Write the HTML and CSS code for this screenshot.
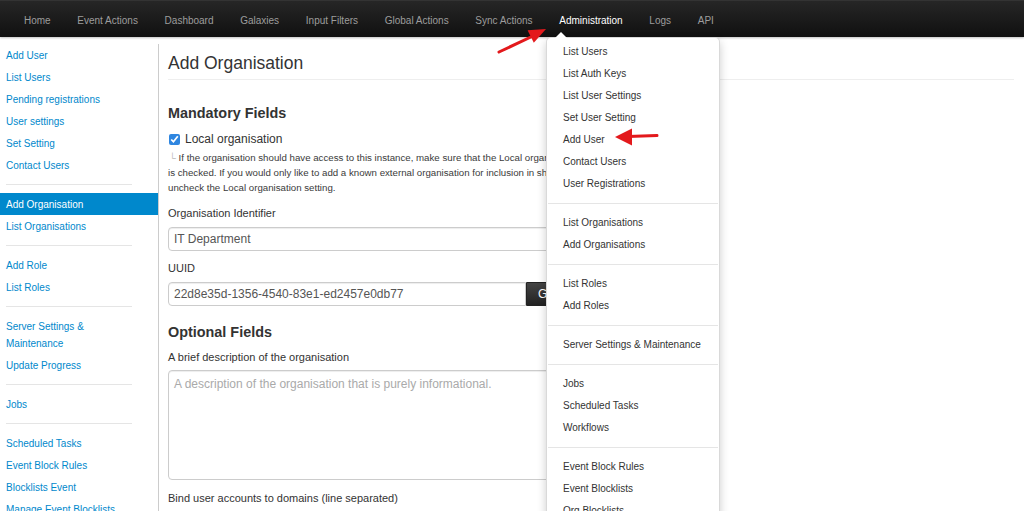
FILE: index.html
```html
<!DOCTYPE html>
<html>
<head>
    <meta charset="UTF-8">
    <title>Add Organisation</title>
    <link rel="stylesheet" href="styles.css">
</head>
<body>
    <div class="navbar">
        <ul class="nav">
            <li><a href="#">Home</a></li>
            <li><a href="#">Event Actions</a></li>
            <li><a href="#">Dashboard</a></li>
            <li><a href="#">Galaxies</a></li>
            <li><a href="#">Input Filters</a></li>
            <li><a href="#">Global Actions</a></li>
            <li><a href="#">Sync Actions</a></li>
            <li class="dropdown open">
                <a href="#" class="current">Administration</a>
                <ul class="dropdown-menu">
                    <li><a href="#">List Users</a></li>
                    <li><a href="#">List Auth Keys</a></li>
                    <li><a href="#">List User Settings</a></li>
                    <li><a href="#">Set User Setting</a></li>
                    <li><a href="#">Add User</a></li>
                    <li><a href="#">Contact Users</a></li>
                    <li><a href="#">User Registrations</a></li>
                    <li class="divider"></li>
                    <li><a href="#">List Organisations</a></li>
                    <li><a href="#">Add Organisations</a></li>
                    <li class="divider"></li>
                    <li><a href="#">List Roles</a></li>
                    <li><a href="#">Add Roles</a></li>
                    <li class="divider"></li>
                    <li><a href="#">Server Settings &amp; Maintenance</a></li>
                    <li class="divider"></li>
                    <li><a href="#">Jobs</a></li>
                    <li><a href="#">Scheduled Tasks</a></li>
                    <li><a href="#">Workflows</a></li>
                    <li class="divider"></li>
                    <li><a href="#">Event Block Rules</a></li>
                    <li><a href="#">Event Blocklists</a></li>
                    <li><a href="#">Org Blocklists</a></li>
                    <li><a href="#">Blocklist Rules</a></li>
                </ul>
            </li>
            <li><a href="#">Logs</a></li>
            <li><a href="#">API</a></li>
        </ul>
    </div>

    <div class="page">
        <ul class="side-menu">
            <li><a href="#">Add User</a></li>
            <li><a href="#">List Users</a></li>
            <li><a href="#">Pending registrations</a></li>
            <li><a href="#">User settings</a></li>
            <li><a href="#">Set Setting</a></li>
            <li><a href="#">Contact Users</a></li>
            <li class="divider"></li>
            <li class="active"><a href="#">Add Organisation</a></li>
            <li><a href="#">List Organisations</a></li>
            <li class="divider"></li>
            <li><a href="#">Add Role</a></li>
            <li><a href="#">List Roles</a></li>
            <li class="divider"></li>
            <li><a href="#">Server Settings &amp; Maintenance</a></li>
            <li><a href="#">Update Progress</a></li>
            <li class="divider"></li>
            <li><a href="#">Jobs</a></li>
            <li class="divider"></li>
            <li><a href="#">Scheduled Tasks</a></li>
            <li><a href="#">Event Block Rules</a></li>
            <li><a href="#">Blocklists Event</a></li>
            <li><a href="#">Manage Event Blocklists</a></li>
        </ul>

        <div class="main">
            <h2 class="page-title">Add Organisation</h2>

            <h3>Mandatory Fields</h3>
            <label class="checkbox">
                <input type="checkbox" checked> Local organisation
            </label>
            <div class="help">
                <span class="help-mark">└</span> If the organisation should have access to this instance, make sure that the Local organisation checkbox<br>
                is checked. If you would only like to add a known external organisation for inclusion in sharing groups,<br>
                uncheck the Local organisation setting.
            </div>

            <label class="field-label" for="name">Organisation Identifier</label>
            <input type="text" id="name" class="text-input wide" value="IT Department">

            <label class="field-label" for="uuid">UUID</label>
            <div class="input-append">
                <input type="text" id="uuid" class="text-input" value="22d8e35d-1356-4540-83e1-ed2457e0db77">
                <button class="btn-inverse">Generate UUID</button>
            </div>

            <h3 class="optional">Optional Fields</h3>
            <label class="field-label short" for="description">A brief description of the organisation</label>
            <textarea id="description" class="text-input wide" placeholder="A description of the organisation that is purely informational."></textarea>

            <label class="field-label" for="domains">Bind user accounts to domains (line separated)</label>
            <textarea id="domains" class="text-input wide"></textarea>
        </div>
    </div>

    <!-- red annotation arrows -->
    <svg class="annotations" width="1024" height="511" viewBox="0 0 1024 511">
        <line x1="499" y1="52" x2="533" y2="36" stroke="#e3191c" stroke-width="3" stroke-linecap="round"/>
        <polygon points="546,29 533.8,42.8 527.6,30.2" fill="#e3191c"/>
        <line x1="657" y1="135.5" x2="628" y2="136.5" stroke="#e3191c" stroke-width="3" stroke-linecap="round"/>
        <polygon points="615,137 632,128.5 632,145.5" fill="#e3191c"/>
    </svg>
</body>
</html>
```

FILE: styles.css
```css
body {
    margin: 0;
    font-family: "Liberation Sans", Arial, Helvetica, sans-serif;
    color: #333;
    background: #fff;
    overflow: hidden;
}
ul {
    list-style: none;
    margin: 0;
    padding: 0;
}
a {
    text-decoration: none;
}

/* top bar */
.navbar {
    height: 37px;
    box-sizing: border-box;
    background: linear-gradient(#262626, #101010);
    border-top: 1px solid #333;
    box-shadow: 0 1px 2px rgba(0,0,0,0.25);
    position: relative;
    z-index: 5;
}
.nav {
    display: flex;
    padding-left: 10.6px;
}
.nav > li {
    position: relative;
}
.nav > li > a {
    display: block;
    padding: 3px 13.35px 0;
    line-height: 33px;
    font-size: 10px;
    color: #9d9d9d;
}
.nav > li > a.current {
    color: #fff;
}
.dropdown-menu {
    position: absolute;
    top: 36px;
    left: 0;
    width: 174px;
    box-sizing: border-box;
    padding: 3px 0;
    background: #fff;
    border: 1px solid rgba(0,0,0,0.15);
    border-radius: 5px;
    box-shadow: 0 4px 10px rgba(0,0,0,0.2);
}
.dropdown-menu::before {
    content: "";
    position: absolute;
    top: -6px;
    left: 8px;
    border-left: 6px solid transparent;
    border-right: 6px solid transparent;
    border-bottom: 6px solid #fff;
}
.dropdown-menu a {
    display: block;
    padding: 0 16px;
    line-height: 22px;
    font-size: 10px;
    color: #333;
    white-space: nowrap;
}
.dropdown-menu .divider {
    height: 1px;
    margin: 8px 1px;
    background: #e5e5e5;
}

/* page */
.page {
    display: flex;
}
.side-menu {
    width: 158px;
    flex-shrink: 0;
    margin-top: 7px;
    min-height: 600px;
    border-right: 1px solid #ccc;
}
.side-menu a {
    display: block;
    padding: 2.5px 26px 2.5px 6px;
    line-height: 17px;
    font-size: 10px;
    color: #0088cc;
}
.side-menu .active a {
    background: #0088cc;
    color: #fff;
}
.side-menu .divider {
    height: 1px;
    margin: 8px 26px 8px 6px;
    background: #e5e5e5;
}

.main {
    flex: 1;
    padding: 15px 10px 0 9px;
}
.page-title {
    margin: 0;
    padding-bottom: 5px;
    line-height: 22px;
    font-size: 17.5px;
    font-weight: normal;
    border-bottom: 1px solid #eee;
}
h3 {
    margin: 23px 0 0;
    line-height: 20px;
    font-size: 14.4px;
    font-weight: bold;
}
h3.optional {
    margin-top: 16px;
}
.checkbox {
    display: flex;
    align-items: center;
    margin-top: 7px;
    line-height: 18px;
    font-size: 12px;
}
.checkbox input {
    width: 11px;
    height: 11px;
    margin: 0 5px 0 1px;
    accent-color: #2f86e0;
}
.help {
    margin-top: 1.5px;
    padding-bottom: 1px;
    line-height: 15px;
    font-size: 9.7px;
    color: #3a3a3a;
}
.help-mark {
    color: #bbb;
    margin-left: 1px;
}
.field-label {
    display: block;
    margin: 9px 0 6px;
    line-height: 16px;
    font-size: 11px;
}
.field-label.short {
    margin: 7px 0 5px;
}
textarea + .field-label {
    margin-top: 10px;
}
.text-input {
    display: block;
    box-sizing: border-box;
    width: 358px;
    height: 24px;
    margin: 0;
    padding: 0 5px;
    border: 1px solid #ccc;
    border-radius: 4px;
    box-shadow: inset 0 1px 1px rgba(0,0,0,0.075);
    font-family: inherit;
    font-size: 12px;
    color: #555;
}
.text-input.wide {
    width: 470px;
}
textarea.text-input {
    height: 110px;
    padding: 5px;
    line-height: 16px;
    resize: none;
}
textarea::placeholder {
    color: #aaa;
}
.input-append {
    display: flex;
}
.input-append .text-input {
    border-radius: 4px 0 0 4px;
}
.btn-inverse {
    height: 24px;
    padding: 0 11px;
    border: 1px solid #222;
    border-radius: 0 4px 4px 0;
    background: linear-gradient(#444, #222);
    color: #fff;
    font-family: inherit;
    font-size: 12px;
}

.annotations {
    position: absolute;
    top: 0;
    left: 0;
    pointer-events: none;
    z-index: 10;
}
```
